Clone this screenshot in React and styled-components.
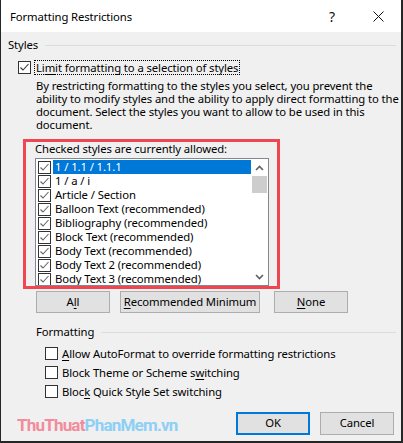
import React from 'react';
import styled, { createGlobalStyle } from 'styled-components';

const GlobalStyle = createGlobalStyle`
  html, body {
    margin: 0;
    padding: 0;
    background: #fff;
  }
  body {
    font-family: 'Segoe UI', 'Noto Sans', sans-serif;
    font-size: 11.3px;
    letter-spacing: -0.1px;
    color: #000;
  }
  * {
    box-sizing: border-box;
  }
`;

const Window = styled.div`
  width: 403px;
  height: 443px;
  background: #f0f0f0;
  border-left: 1px solid #262626;
  border-right: 2px solid #262626;
  border-bottom: 2px solid #262626;
  display: flex;
  flex-direction: column;
  overflow: hidden;
`;

const TitleBar = styled.div`
  height: 32px;
  flex: none;
  background: #fff;
  display: flex;
  align-items: center;
  padding-left: 9px;
`;

const Title = styled.div`
  flex: 1;
  line-height: 16px;
  padding-top: 1px;
`;

const TitleButton = styled.div`
  width: 46px;
  height: 32px;
  display: flex;
  align-items: center;
  justify-content: center;
  font-size: 14px;
  color: #111;
`;

const Body = styled.div`
  flex: 1;
  display: flex;
  flex-direction: column;
  padding: 6px 5px 0 7px;
`;

const GroupHeader = styled.div`
  display: flex;
  align-items: center;
  line-height: 14px;
  margin-left: ${p => p.$indent || 0}px;
  margin-top: ${p => p.$top || 0}px;

  &::after {
    content: '';
    flex: 1;
    height: 1px;
    background: #dcdcdc;
    margin-left: 7px;
  }
`;

const CheckRow = styled.div`
  display: flex;
  align-items: center;
  height: ${p => p.$height || 15}px;
  margin-left: ${p => p.$indent || 0}px;
  margin-top: ${p => p.$top || 0}px;
`;

const Box = styled.span`
  width: 13px;
  height: 13px;
  flex: none;
  border: 1px solid #333;
  background: #fff;
  display: flex;
  align-items: center;
  justify-content: center;
`;

const Label = styled.span`
  margin-left: ${p => p.$focus ? 3 : 4}px;
  padding: 0 ${p => p.$focus ? 1 : 0}px;
  line-height: 13px;
  border: ${p => p.$focus ? '1px dotted #000' : 'none'};
  white-space: nowrap;
`;

const Key = styled.span`
  text-decoration: underline;
  text-underline-offset: 2px;
`;

const Description = styled.p`
  margin: 4px 0 0 28px;
  line-height: 13px;
  white-space: nowrap;
`;

const Highlight = styled.div`
  margin: 8px 0 0 15px;
  width: 257px;
  border: 3px solid #f04652;
  padding: 0 0 0 9px;
`;

const ListCaption = styled.div`
  line-height: 14px;
  margin-bottom: 2px;
`;

const List = styled.div`
  width: 234px;
  height: 128px;
  border: 1px solid #828790;
  background: #fff;
  display: flex;
  overflow: hidden;
`;

const Items = styled.div`
  flex: 1;
  padding: 1px 0 0 2px;
`;

const Item = styled.div`
  height: 14px;
  display: flex;
  align-items: center;
`;

const ItemText = styled.span`
  flex: 1;
  height: 14px;
  line-height: 14px;
  margin-left: 2px;
  padding-left: 2px;
  white-space: nowrap;
  background: ${p => p.$selected ? '#0078d7' : 'transparent'};
  color: ${p => p.$selected ? '#fff' : '#000'};
`;

const ScrollBar = styled.div`
  width: 17px;
  display: flex;
  flex-direction: column;
  align-items: center;
  background: #fff;
`;

const Arrow = styled.div`
  height: 17px;
  width: 17px;
  display: flex;
  align-items: center;
  justify-content: center;
`;

const Thumb = styled.div`
  width: 15px;
  height: 17px;
  background: #cdcdcd;
`;

const Spacer = styled.div`
  flex: 1;
`;

const ButtonRow = styled.div`
  display: flex;
  margin: 2px 0 0 28px;
`;

const Button = styled.div`
  width: ${p => p.$width || 74}px;
  height: ${p => p.$height || 22}px;
  margin-left: ${p => p.$gap || 0}px;
  flex: none;
  background: #e1e1e1;
  border: ${p => p.$default ? '2px solid #0078d7' : '1px solid #adadad'};
  display: flex;
  align-items: center;
  justify-content: center;
  line-height: 14px;
  white-space: nowrap;
`;

const Footer = styled.div`
  display: flex;
  align-items: center;
  margin-top: 10px;
  padding: 0 2px 0 9px;
`;

const Watermark = styled.div`
  flex: 1;
  font-family: Roboto, 'Liberation Sans', sans-serif;
  font-weight: 700;
  font-size: 17px;
  letter-spacing: -0.8px;
  color: #f28c9c;
  padding-top: 4px;

  span {
    color: #8ecff5;
  }
`;

const Check = ({ color = '#333' }) => (
  <svg width="11" height="11" viewBox="0 0 11 11">
    <path d="M1.5 5.5 L4 8 L9.5 2" fill="none" stroke={color} strokeWidth="1.1" />
  </svg>
);

const Chevron = ({ down }) => (
  <svg width="9" height="6" viewBox="0 0 9 6">
    <path
      d={down ? 'M1 1 L4.5 4.5 L8 1' : 'M1 5 L4.5 1.5 L8 5'}
      fill="none"
      stroke="#606060"
      strokeWidth="1.6"
    />
  </svg>
);

const styles = [
  '1 / 1.1 / 1.1.1',
  '1 / a / i',
  'Article / Section',
  'Balloon Text (recommended)',
  'Bibliography (recommended)',
  'Block Text (recommended)',
  'Body Text (recommended)',
  'Body Text 2 (recommended)',
  'Body Text 3 (recommended)',
];

export default function App() {
  return (
    <>
      <GlobalStyle />
      <Window>
        <TitleBar>
          <Title>Formatting Restrictions</Title>
          <TitleButton>?</TitleButton>
          <TitleButton>
            <svg width="11" height="11" viewBox="0 0 11 11">
              <path d="M0.5 0.5 L10.5 10.5 M10.5 0.5 L0.5 10.5" stroke="#111" strokeWidth="1" />
            </svg>
          </TitleButton>
        </TitleBar>

        <Body>
          <GroupHeader>Styles</GroupHeader>

          <CheckRow $indent={10} $top={8}>
            <Box><Check /></Box>
            <Label $focus>Li<Key>m</Key>it formatting to a selection of styles</Label>
          </CheckRow>

          <Description>
            By restricting formatting to the styles you select, you prevent the<br />
            ability to modify styles and the ability to apply direct formatting to the<br />
            document. Select the styles you want to allow to be used in this<br />
            document.
          </Description>

          <Highlight>
            <ListCaption>Checked styles are currently allowed:</ListCaption>
            <List>
              <Items>
                {styles.map((s, i) => (
                  <Item key={s}>
                    <Box><Check color="#666" /></Box>
                    <ItemText $selected={i === 0}>{s}</ItemText>
                  </Item>
                ))}
              </Items>
              <ScrollBar>
                <Arrow><Chevron /></Arrow>
                <Thumb />
                <Spacer />
                <Arrow><Chevron down /></Arrow>
              </ScrollBar>
            </List>
          </Highlight>

          <ButtonRow>
            <Button>A<Key>l</Key>l</Button>
            <Button $width={140} $gap={10}><Key>R</Key>ecommended Minimum</Button>
            <Button $gap={14}><Key>N</Key>one</Button>
          </ButtonRow>

          <GroupHeader $indent={28} $top={12}>Formatting</GroupHeader>

          <CheckRow $indent={37} $top={5} $height={19}>
            <Box />
            <Label><Key>A</Key>llow AutoFormat to override formatting restrictions</Label>
          </CheckRow>
          <CheckRow $indent={37} $height={19}>
            <Box />
            <Label>Block Theme or Scheme s<Key>w</Key>itching</Label>
          </CheckRow>
          <CheckRow $indent={37} $height={19}>
            <Box />
            <Label>Bloc<Key>k</Key> Quick Style Set switching</Label>
          </CheckRow>

          <Footer>
            <Watermark>ThuThuat<span>PhanMem.vn</span></Watermark>
            <Button $default $height={23}>OK</Button>
            <Button $gap={10} $height={23}>Cancel</Button>
          </Footer>
        </Body>
      </Window>
    </>
  );
}
